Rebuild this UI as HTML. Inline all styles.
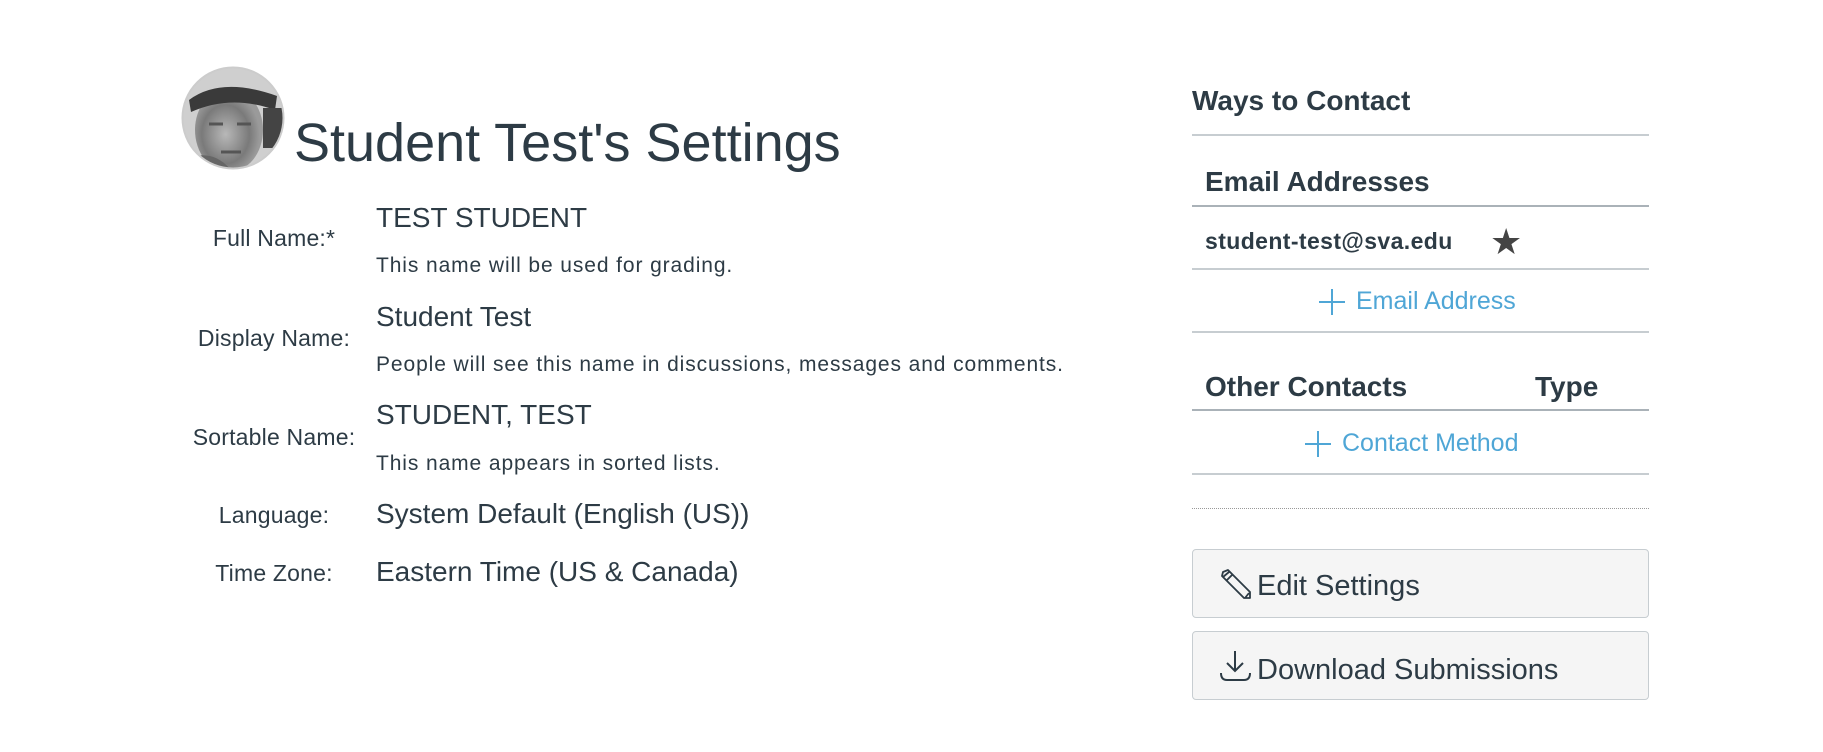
<!DOCTYPE html>
<html><head><meta charset="utf-8"><style>
html,body{margin:0;padding:0;width:1823px;height:752px;background:#fff;overflow:hidden;font-family:"Liberation Sans",sans-serif;color:#2d3b45}
.a{position:absolute;white-space:nowrap;line-height:1}
.lbl{font-size:23px;color:#2d3b45;text-align:center;width:240px;left:154px;letter-spacing:0.2px}
.val{font-size:28px;left:376px}
.hint{font-size:21px;left:376px;letter-spacing:0.9px}
.hr{position:absolute;left:1192px;width:457px;height:0;border-top:2px solid #c7cdd1}
.btn{position:absolute;left:1192px;width:457px;height:69px;background:#f5f5f5;border:1px solid #c7cdd1;border-radius:4px;box-sizing:border-box}
.blue{color:#4fa6d6}
</style></head><body>
<svg class="a" style="left:181px;top:66px" width="104" height="104" viewBox="0 0 104 104">
<defs><clipPath id="c"><circle cx="52" cy="52" r="50"/></clipPath><radialGradient id="g" cx="0.45" cy="0.55" r="0.5"><stop offset="0" stop-color="#b8b8b8"/><stop offset="0.7" stop-color="#7a7a7a"/><stop offset="1" stop-color="#9a9a9a"/></radialGradient></defs>
<g clip-path="url(#c)"><rect width="104" height="104" fill="#cfcfcf"/>
<ellipse cx="48" cy="64" rx="34" ry="42" fill="url(#g)"/>
<path d="M8 34 Q40 10 96 30 L94 44 Q50 28 10 46Z" fill="#3a3a3a"/>
<rect x="82" y="42" width="22" height="40" fill="#444"/>
<path d="M28 58 h14 M56 58 h14 M40 86 h20" stroke="#555" stroke-width="3"/>
<path d="M0 95 Q30 80 50 104 H0Z" fill="#666"/></g>
<circle cx="52" cy="52" r="50.5" fill="none" stroke="#ccc" stroke-width="2"/></svg>
<div class="a" style="left:294px;top:116px;font-size:54px;color:#2d3b45">Student Test's Settings</div>

<div class="a lbl" style="top:227px">Full Name:*</div>
<div class="a val" style="top:204px">TEST STUDENT</div>
<div class="a hint" style="top:255px">This name will be used for grading.</div>

<div class="a lbl" style="top:327px">Display Name:</div>
<div class="a val" style="top:303px">Student Test</div>
<div class="a hint" style="top:354px">People will see this name in discussions, messages and comments.</div>

<div class="a lbl" style="top:426px">Sortable Name:</div>
<div class="a val" style="top:401px">STUDENT, TEST</div>
<div class="a hint" style="top:453px">This name appears in sorted lists.</div>

<div class="a lbl" style="top:504px">Language:</div>
<div class="a val" style="top:500px">System Default (English (US))</div>
<div class="a lbl" style="top:562px">Time Zone:</div>
<div class="a val" style="top:558px">Eastern Time (US &amp; Canada)</div>

<div class="a" style="left:1192px;top:87px;font-size:28px;font-weight:bold">Ways to Contact</div>
<div class="hr" style="top:134px"></div>
<div class="a" style="left:1205px;top:168px;font-size:28px;font-weight:bold">Email Addresses</div>
<div class="hr" style="top:205px;border-top-color:#aab2b8"></div>
<div class="a" style="left:1205px;top:230px;font-size:23px;font-weight:bold;letter-spacing:0.4px">student-test@sva.edu</div>
<div class="a" style="left:1490px;top:224px;font-size:36px;color:#444">★</div>
<div class="hr" style="top:268px"></div>
<svg class="a" style="left:1318px;top:288px" width="28" height="28" viewBox="0 0 28 28"><path d="M14 1V27M1 14H27" stroke="#4fa6d6" stroke-width="2"/></svg>
<div class="a blue" style="left:1356px;top:289px;font-size:25px">Email Address</div>
<div class="hr" style="top:331px"></div>
<div class="a" style="left:1205px;top:373px;font-size:28px;font-weight:bold">Other Contacts</div>
<div class="a" style="left:1535px;top:373px;font-size:28px;font-weight:bold">Type</div>
<div class="hr" style="top:409px;border-top-color:#aab2b8"></div>
<svg class="a" style="left:1304px;top:430px" width="28" height="28" viewBox="0 0 28 28"><path d="M14 1V27M1 14H27" stroke="#4fa6d6" stroke-width="2"/></svg>
<div class="a blue" style="left:1342px;top:431px;font-size:25px">Contact Method</div>
<div class="hr" style="top:473px"></div>
<div class="hr" style="top:508px;border-top:1px dotted #999"></div>

<div class="btn" style="top:549px"></div>
<svg class="a" style="left:1219px;top:569px" width="33" height="31" viewBox="0 0 33 31"><path d="M4 3 L9 1 L31 23 L31 29 L25 29 L3 7Z M4 8 L10 3 M26 29 L30 24 M8 11 L13 6" fill="none" stroke="#2d3b45" stroke-width="1.8" stroke-linejoin="round"/></svg>
<div class="a" style="left:1257px;top:572px;font-size:29px">Edit Settings</div>
<div class="btn" style="top:631px"></div>
<svg class="a" style="left:1219px;top:649px" width="33" height="33" viewBox="0 0 33 33"><path d="M16 2 V22 M8 14 L16 22 L24 14 M2 24 Q2 31 8 31 H25 Q31 31 31 24" fill="none" stroke="#2d3b45" stroke-width="2"/></svg>
<div class="a" style="left:1257px;top:656px;font-size:29px">Download Submissions</div>
</body></html>
